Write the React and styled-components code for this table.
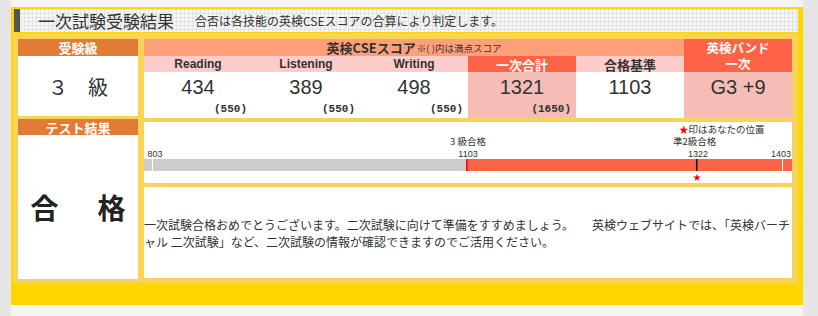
import styled, { createGlobalStyle } from "styled-components";

const scores = [
  { label: "Reading", value: 434, max: 550 },
  { label: "Listening", value: 389, max: 550 },
  { label: "Writing", value: 498, max: 550 },
];

const total = { value: 1321, max: 1650 };
const passLine = 1103;
const band = "G3 +9";

// chart scale: 803 sits 8px in, 1.05px per point
const toX = (score) => 8 + (score - 803) * 1.05;

const ScoreChart = () => {
  const passX = toX(passLine);
  const youX = toX(total.value + 1);
  const topX = toX(1403);
  return (
    <svg width="648" height="61" viewBox="0 0 648 61">
      <g fontFamily='"Noto Sans CJK JP", sans-serif' fontSize="9.5" fill="#333">
        <text x="535" y="10.5">
          <tspan fill="#ff0000">★</tspan>印はあなたの位置
        </text>
        <text x="306" y="23">3 級合格</text>
        <text x="529" y="23">準2級合格</text>
      </g>
      <g fontFamily='"Liberation Sans", sans-serif' fontSize="9" fill="#333" textAnchor="middle">
        <text x="11" y="35">803</text>
        <text x={passX + 1} y="35">1103</text>
        <text x={youX + 1} y="35">1322</text>
        <text x={topX - 1} y="35">1403</text>
      </g>
      <rect x="0" y="37" width={passX} height="12" fill="#cccccc" />
      <rect x={passX} y="37" width={648 - passX} height="12" fill="#ff6347" />
      <rect x="8" y="37" width="1" height="12" fill="#ffffff" />
      <rect x={topX} y="37" width="1" height="12" fill="#ffffff" />
      <rect x={passX - 1} y="37" width="1.5" height="12" fill="#ff0000" />
      <rect x={youX - 1} y="37" width="1.5" height="12" fill="#000000" />
      <text x={youX} y="59" textAnchor="middle" fontSize="10" fill="#ff0000"
        fontFamily='"DejaVu Sans", sans-serif'>★</text>
    </svg>
  );
};

const App = () => (
  <Page>
    <GlobalStyle />
    <Frame>
      <TitleBar>
        <Title>一次試験受験結果</Title>
        <Subtitle>合否は各技能の英検CSEスコアの合算により判定します。</Subtitle>
      </TitleBar>
      <Panel>
        <LeftCol>
          <SideHeader>受験級</SideHeader>
          <GradeCell>３　級</GradeCell>
          <SideHeader $spaced>テスト結果</SideHeader>
          <ResultCell>
            <span>合</span>
            <span>格</span>
          </ResultCell>
        </LeftCol>
        <RightCol>
          <ScoreGrid>
            <CseHeader>
              英検CSEスコア<small>※( )内は満点スコア</small>
            </CseHeader>
            <BandHeader>
              <BandLine $h={17}>英検バンド</BandLine>
              <BandLine $h={16}>一次</BandLine>
            </BandHeader>
            {scores.map((s) => (
              <SkillHeader key={s.label}>{s.label}</SkillHeader>
            ))}
            <SubHeader $strong>一次合計</SubHeader>
            <SubHeader>合格基準</SubHeader>
            {scores.map((s) => (
              <ValueCell key={s.label}>
                <Num>{s.value}</Num>
                <Max>({s.max})</Max>
              </ValueCell>
            ))}
            <ValueCell $tinted>
              <Num>{total.value}</Num>
              <Max>({total.max})</Max>
            </ValueCell>
            <ValueCell>
              <Num>{passLine}</Num>
            </ValueCell>
            <ValueCell $tinted>
              <Num>{band}</Num>
            </ValueCell>
          </ScoreGrid>
          <ChartPanel>
            <ScoreChart />
          </ChartPanel>
          <Message>
            <p>
              <Line>一次試験合格おめでとうございます。二次試験に向けて準備をすすめましょう。　　英検ウェブサイトでは、「英検バーチ</Line>
              <Line>ャル 二次試験」など、二次試験の情報が確認できますのでご活用ください。</Line>
            </p>
          </Message>
        </RightCol>
      </Panel>
    </Frame>
  </Page>
);

const GlobalStyle = createGlobalStyle`
  body {
    margin: 0;
    background: #e6e6e6;
    font-family: "Noto Sans CJK JP", "Liberation Sans", sans-serif;
    color: #333;
  }
`;

const Page = styled.div`
  margin-left: 11px;
  width: 792px;
  background: #f4f4f4;
  padding: 7px 0 11px;
`;

const Frame = styled.div`
  background: #ffd700;
  padding: 2px 5px 22px 2px;
`;

const TitleBar = styled.div`
  display: flex;
  align-items: center;
  height: 23px;
  margin-left: 1px;
  border-left: 6px solid #555;
  background-color: #f6f6f6;
  background-image:
    linear-gradient(90deg, #e3e3e3 1px, transparent 1px),
    linear-gradient(#e3e3e3 1px, transparent 1px);
  background-size: 4px 4px;
`;

const Title = styled.h1`
  margin: 0 0 0 18px;
  font-size: 17px;
  font-weight: normal;
  line-height: 23px;
  color: #333;
`;

const Subtitle = styled.span`
  margin-left: 21px;
  font-size: 12px;
  color: #333;
`;

const Panel = styled.div`
  display: flex;
  gap: 6px;
  margin-top: 1px;
  padding: 6px 6px 4px 5px;
  background: #f7d358;
`;

const LeftCol = styled.div`
  display: flex;
  flex-direction: column;
  width: 120px;
`;

const SideHeader = styled.div`
  display: flex;
  align-items: center;
  justify-content: center;
  height: ${(p) => (p.$spaced ? "16px" : "17px")};
  margin-top: ${(p) => (p.$spaced ? "3px" : "0")};
  background: #e17b35;
  color: #fff;
  font-size: 13px;
  font-weight: bold;
`;

const GradeCell = styled.div`
  display: flex;
  align-items: center;
  justify-content: center;
  height: 60px;
  background: #fff;
  font-size: 20px;
  color: #333;
`;

const ResultCell = styled.div`
  display: flex;
  align-items: center;
  justify-content: center;
  gap: 39px;
  height: 144px;
  background: #fff;
  font-size: 28px;
  font-weight: bold;
  color: #222;
`;

const RightCol = styled.div`
  display: flex;
  flex-direction: column;
  gap: 4px;
  width: 648px;
`;

const ScoreGrid = styled.div`
  display: grid;
  grid-template-columns: repeat(6, 108px);
  grid-template-rows: 17px 16px 46px;
`;

const CseHeader = styled.div`
  grid-column: 1 / span 5;
  display: flex;
  align-items: center;
  justify-content: center;
  background: #ffa07a;
  font-size: 13px;
  font-weight: bold;
  color: #333;

  small {
    margin-left: 1px;
    font-size: 9.5px;
    font-weight: normal;
  }
`;

const BandHeader = styled.div`
  grid-column: 6;
  grid-row: 1 / span 2;
  display: flex;
  flex-direction: column;
  background: #ff6347;
  color: #fff;
  font-size: 12.5px;
  font-weight: bold;
`;

const BandLine = styled.div`
  display: flex;
  align-items: center;
  justify-content: center;
  height: ${(p) => p.$h}px;
  line-height: ${(p) => p.$h - 2}px;
`;

const SkillHeader = styled.div`
  display: flex;
  align-items: center;
  justify-content: center;
  background: #ffcccc;
  font-family: "Liberation Sans", sans-serif;
  font-size: 12px;
  font-weight: bold;
  color: #333;
`;

const SubHeader = styled.div`
  display: flex;
  align-items: center;
  justify-content: center;
  background: ${(p) => (p.$strong ? "#ff6347" : "#ffcccc")};
  color: ${(p) => (p.$strong ? "#fff" : "#333")};
  font-size: 13px;
  font-weight: bold;
`;

const ValueCell = styled.div`
  display: flex;
  flex-direction: column;
  padding: 4px 5px 0 0;
  background: ${(p) => (p.$tinted ? "#f5bdb6" : "#fff")};
`;

const Num = styled.div`
  padding-left: 5px;
  text-align: center;
  font-family: "Liberation Sans", sans-serif;
  font-size: 20px;
  line-height: 22px;
  color: #333;
`;

const Max = styled.div`
  margin-top: 4px;
  text-align: right;
  font-family: "Liberation Mono", monospace;
  font-size: 11px;
  font-weight: bold;
  line-height: 14px;
  color: #333;
`;

const ChartPanel = styled.div`
  height: 61px;
  background: #fff;

  svg {
    display: block;
  }
`;

const Message = styled.div`
  display: flex;
  align-items: center;
  height: 91px;
  background: #fff;
  font-size: 12px;
  line-height: 17px;
  color: #333;

  p {
    margin: 0;
  }
`;

const Line = styled.span`
  display: block;
  white-space: nowrap;
`;

export default App;
